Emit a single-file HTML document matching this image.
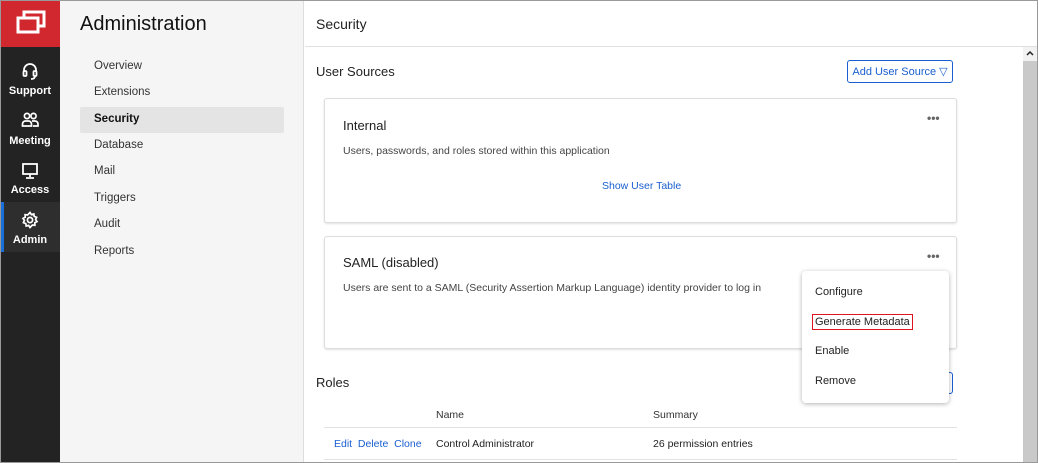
<!DOCTYPE html>
<html><head><style>
*{margin:0;padding:0;box-sizing:border-box}
body{width:1038px;height:463px;overflow:hidden;font-family:"Liberation Sans",Arial,sans-serif;background:#fff;position:relative;color:#222}
.a{position:absolute}
.side{left:0;top:0;width:60px;height:463px;background:#232323}
.logo{left:0;top:0;width:60px;height:47px;background:#d0282e}
.ni{left:0;width:60px;text-align:center;color:#fff;font-size:11px;font-weight:bold}
.nav{left:60px;top:0;width:244px;height:463px;background:#f5f5f5;border-right:1px solid #ddd}
.nl{left:94px;font-size:11.5px;color:#333}
.card{background:#fff;border:1px solid #ddd;border-radius:3px;box-shadow:0 1px 2px rgba(0,0,0,.12)}
.blue{color:#1a5fd0}
.dots{font-size:12px;color:#666;letter-spacing:0px;font-weight:bold}
</style></head><body>
<div class="a side"></div>
<div class="a logo"><svg width="60" height="47"><rect x="24" y="12" width="20" height="14" fill="none" stroke="#fff" stroke-width="3"/><rect x="18" y="18" width="20" height="14" fill="#d0282e" stroke="#fff" stroke-width="3"/></svg></div>
<svg class="a" style="left:21px;top:62px" width="18" height="18" viewBox="0 0 18 18" fill="none" stroke="#fff" stroke-width="1.8"><path d="M3 10V8a6 6 0 0112 0v2"/><rect x="2.5" y="9" width="3" height="5" rx="1"/><rect x="12.5" y="9" width="3" height="5" rx="1"/><path d="M14 14q0 3-4 3"/></svg>
<div class="a ni" style="top:85px">Support</div>
<svg class="a" style="left:21px;top:112px" width="18" height="16" viewBox="0 0 18 16" fill="none" stroke="#fff" stroke-width="1.7"><circle cx="6" cy="4" r="2.6"/><circle cx="12.5" cy="4" r="2.6"/><path d="M1.5 14v-2a3 3 0 013-3h3a3 3 0 013 3v2zM11 9h3a3 3 0 013 3v2h-5"/></svg>
<div class="a ni" style="top:135px">Meeting</div>
<svg class="a" style="left:21px;top:162px" width="18" height="18" viewBox="0 0 18 18" fill="none" stroke="#fff" stroke-width="1.8"><rect x="2" y="2" width="14" height="10"/><path d="M9 12v3M5 16h8"/></svg>
<div class="a ni" style="top:184px">Access</div>
<div class="a" style="left:0;top:202px;width:60px;height:50px;background:#2e2e2e;border-left:4px solid #1a6fd8"></div>
<svg class="a" style="left:21px;top:211px" width="18" height="18" viewBox="0 0 18 18" fill="none" stroke="#fff" stroke-width="1.7"><circle cx="9" cy="9" r="2.6"/><path d="M9 1.5l1.4 2.1 2.4-.7.4 2.5 2.4.9-1 2.3 1.4 2-2.2 1.2.1 2.5-2.5-.3L9 16.5l-1.4-2.1-2.4.7-.4-2.5-2.4-.9 1-2.3-1.4-2 2.2-1.2-.1-2.5 2.5.3z"/></svg>
<div class="a ni" style="top:234px">Admin</div>
<div class="a nav"></div>
<div class="a" style="left:80px;top:13px;font-size:20px;color:#111">Administration</div>
<div class="a nl" style="top:60px">Overview</div>
<div class="a nl" style="top:86px">Extensions</div>
<div class="a" style="left:80px;top:107px;width:204px;height:26px;background:#e4e4e4;border-radius:2px"></div>
<div class="a nl" style="top:113px;font-weight:bold;color:#111">Security</div>
<div class="a nl" style="top:139px">Database</div>
<div class="a nl" style="top:165px">Mail</div>
<div class="a nl" style="top:192px">Triggers</div>
<div class="a nl" style="top:218px">Audit</div>
<div class="a nl" style="top:245px">Reports</div>
<div class="a" style="left:305px;top:0;width:733px;height:47px;border-bottom:1px solid #e0e0e0"></div>
<div class="a" style="left:316px;top:16px;font-size:14px">Security</div>
<div class="a" style="left:1023px;top:47px;width:14px;height:416px;background:#c9c9c9"></div>
<div class="a" style="left:1023px;top:47px;width:14px;height:14px;background:#f2f2f2"><svg width="14" height="14"><path d="M4 8l3-3 3 3" fill="none" stroke="#222" stroke-width="1.5"/></svg></div>
<div class="a" style="left:316px;top:64px;font-size:13px">User Sources</div>
<div class="a blue" style="left:847px;top:60px;width:106px;height:23px;border:1px solid #1a5fd0;border-radius:3px;font-size:11px;display:flex;align-items:center;justify-content:center">Add User Source ▽</div>
<div class="a card" style="left:324px;top:98px;width:633px;height:125px"></div>
<div class="a" style="left:343px;top:118px;font-size:13px">Internal</div>
<div class="a dots" style="left:927px;top:111px">•••</div>
<div class="a" style="left:343px;top:145px;font-size:10.5px;color:#444">Users, passwords, and roles stored within this application</div>
<div class="a blue" style="left:602px;top:180px;font-size:10.5px">Show User Table</div>
<div class="a card" style="left:324px;top:236px;width:633px;height:113px"></div>
<div class="a" style="left:343px;top:255px;font-size:13px">SAML (disabled)</div>
<div class="a dots" style="left:927px;top:249px">•••</div>
<div class="a" style="left:343px;top:282px;font-size:10.5px;color:#444">Users are sent to a SAML (Security Assertion Markup Language) identity provider to log in</div>
<div class="a" style="left:316px;top:375px;font-size:13px">Roles</div>
<div class="a" style="left:900px;top:372px;width:53px;height:22px;border:1px solid #1a5fd0;border-radius:3px"></div>
<div class="a" style="left:436px;top:409px;font-size:10.5px;color:#333">Name</div>
<div class="a" style="left:653px;top:409px;font-size:10.5px;color:#333">Summary</div>
<div class="a" style="left:324px;top:427px;width:633px;height:1px;background:#e2e2e2"></div>
<div class="a blue" style="left:334px;top:438px;font-size:10.5px">Edit&nbsp;&nbsp;Delete&nbsp;&nbsp;Clone</div>
<div class="a" style="left:436px;top:438px;font-size:10.5px">Control Administrator</div>
<div class="a" style="left:653px;top:438px;font-size:10.5px">26 permission entries</div>
<div class="a" style="left:324px;top:459px;width:633px;height:1px;background:#e2e2e2"></div>
<div class="a" style="left:802px;top:271px;width:147px;height:132px;background:#fff;border-radius:4px;box-shadow:0 1px 5px rgba(0,0,0,.3)"></div>
<div class="a" style="left:815px;top:286px;font-size:11px">Configure</div>
<div class="a" style="left:812px;top:314px;padding:1px 2px;border:1.5px solid #e0141e;font-size:11px">Generate Metadata</div>
<div class="a" style="left:815px;top:345px;font-size:11px">Enable</div>
<div class="a" style="left:815px;top:375px;font-size:11px">Remove</div>
<div class="a" style="left:0;top:0;width:1038px;height:463px;border:1px solid #999;pointer-events:none"></div>
</body></html>
